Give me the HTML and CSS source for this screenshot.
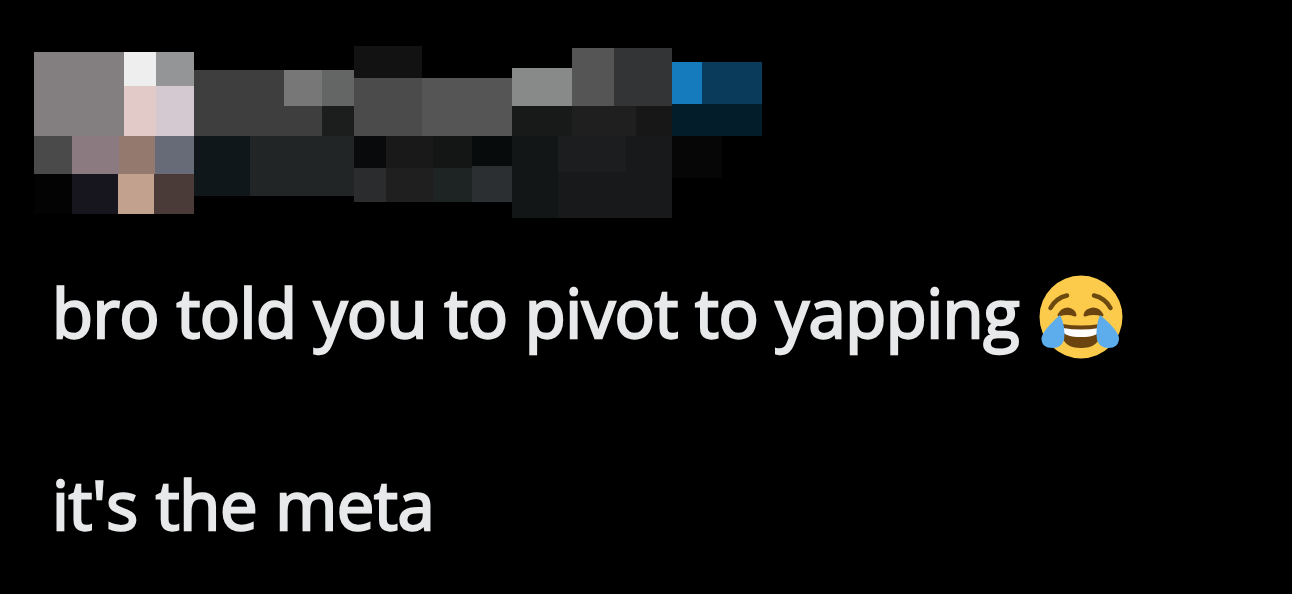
FILE: index.html
```html
<!DOCTYPE html>
<html lang="en">

<head>
    <meta charset="UTF-8">
    <meta name="viewport" content="width=device-width, initial-scale=1.0">
    <title>Post</title>
    <link rel="stylesheet" href="styles.css">
</head>

<body>
    <article class="post">
        <!-- pixelated avatar, name and handle -->
        <svg class="author" viewBox="34 46 728 172" role="img" aria-label="Hidden author">
            <!-- avatar -->
            <rect x="34" y="52" width="90" height="84" fill="#837f80"/>
            <rect x="124" y="52" width="32" height="34" fill="#eeeeee"/>
            <rect x="156" y="52" width="38" height="34" fill="#949596"/>
            <rect x="124" y="86" width="32" height="50" fill="#e1cac7"/>
            <rect x="156" y="86" width="38" height="50" fill="#d4c9d1"/>
            <rect x="34" y="136" width="38" height="38" fill="#4a4a4a"/>
            <rect x="72" y="136" width="47" height="38" fill="#8b7b80"/>
            <rect x="119" y="136" width="36" height="38" fill="#94796f"/>
            <rect x="155" y="136" width="39" height="38" fill="#676b78"/>
            <rect x="34" y="174" width="38" height="40" fill="#030303"/>
            <rect x="72" y="174" width="46" height="40" fill="#17151d"/>
            <rect x="118" y="174" width="36" height="40" fill="#c2a28e"/>
            <rect x="154" y="174" width="40" height="40" fill="#4a3b38"/>

            <!-- name -->
            <rect x="194" y="70" width="128" height="66" fill="#3e3e3f"/>
            <rect x="284" y="70" width="38" height="36" fill="#777777"/>
            <rect x="322" y="70" width="32" height="36" fill="#646666"/>
            <rect x="322" y="106" width="32" height="30" fill="#1c1e1d"/>
            <rect x="194" y="136" width="56" height="60" fill="#10171b"/>
            <rect x="250" y="136" width="104" height="60" fill="#222526"/>

            <rect x="354" y="46" width="68" height="32" fill="#121212"/>
            <rect x="354" y="78" width="68" height="58" fill="#4b4b4b"/>
            <rect x="422" y="78" width="90" height="58" fill="#555555"/>
            <rect x="354" y="136" width="32" height="32" fill="#080a0b"/>
            <rect x="386" y="136" width="47" height="32" fill="#181918"/>
            <rect x="433" y="136" width="39" height="32" fill="#141616"/>
            <rect x="472" y="136" width="40" height="30" fill="#080b0c"/>
            <rect x="354" y="168" width="32" height="34" fill="#2a2c2e"/>
            <rect x="386" y="168" width="47" height="34" fill="#1f1f20"/>
            <rect x="433" y="168" width="39" height="34" fill="#1e2324"/>
            <rect x="472" y="166" width="40" height="36" fill="#2c2f31"/>

            <rect x="512" y="68" width="60" height="38" fill="#878a89"/>
            <rect x="572" y="48" width="42" height="58" fill="#555555"/>
            <rect x="614" y="48" width="58" height="58" fill="#333435"/>
            <rect x="512" y="106" width="60" height="30" fill="#181a19"/>
            <rect x="572" y="106" width="64" height="30" fill="#1f1f1f"/>
            <rect x="636" y="106" width="36" height="30" fill="#171717"/>
            <rect x="512" y="136" width="160" height="82" fill="#17191a"/>
            <rect x="512" y="136" width="46" height="82" fill="#131617"/>
            <rect x="558" y="136" width="68" height="36" fill="#1b1d1e"/>

            <!-- badge -->
            <rect x="672" y="62" width="30" height="42" fill="#167bbd"/>
            <rect x="702" y="62" width="60" height="42" fill="#0a3b5a"/>
            <rect x="672" y="104" width="90" height="32" fill="#041d2b"/>
            <rect x="672" y="136" width="50" height="42" fill="#060606"/>
        </svg>

        <p class="line">bro told you to pivot to yapping
            <svg class="emoji" viewBox="0 0 84 84" role="img" aria-label="Face with tears of joy">
                <circle cx="42" cy="42" r="41.5" fill="#fdcb4c"/>
                <g fill="none" stroke="#6b4a10" stroke-width="4.500" stroke-linecap="round">
                    <path d="M11.500 33Q17 23 28 20.500"/>
                    <path d="M71.500 33Q66 23 55 20.500"/>
                </g>
                <path d="M20 40Q23 34 29 34Q35 35 36 40Q28 37 20 40Z" fill="#6b4410" stroke="#6b4410" stroke-width="3" stroke-linejoin="round"/>
                <path d="M46 40Q47 35 54 34Q60 34 63 40Q55 37 46 40Z" fill="#6b4410" stroke="#6b4410" stroke-width="3" stroke-linejoin="round"/>
                <path d="M23 49Q42 52 61 49V60Q59 73 42 73Q25 73 23 60Z" fill="#6b4410"/>
                <path d="M24 53Q42 56 60 53V56Q58 62 42 62Q26 62 24 56Z" fill="#ffffff"/>
                <path d="M21 40Q27 52 25 65Q22 73 14 73Q2 73 2.500 63Q4 55 21 40Z" fill="#5dadec"/>
                <path d="M61 40Q56 52 58 65Q61 73 69 73Q80 73 80 63Q79 55 61 40Z" fill="#5dadec"/>
            </svg>
        </p>
        <p class="line last">it's the meta</p>
    </article>
</body>

</html>
```
FILE: styles.css
```css
body {
    margin: 0;
    background-color: #000;
    color: #e7e9ea;
    font-family: "Open Sans", "Noto Sans", sans-serif;
}

.post {
    padding: 46px 34px 0;
}

.author {
    display: block;
    width: 728px;
    height: 172px;
    margin-bottom: 46px;
    shape-rendering: crispEdges;
}

.line {
    margin: 0 0 96px 18px;
    font-size: 67px;
    line-height: 96px;
    letter-spacing: -0.5px;
    word-spacing: 0.3px;
    white-space: nowrap;
    -webkit-text-stroke: 2.3px #e7e9ea; /* medium weight */
}

.last {
    margin-bottom: 0;
    letter-spacing: -0.4px;
    word-spacing: 1px;
}

.emoji {
    width: 84px;
    height: 84px;
    margin: -10px 0 -10px 3px;
    vertical-align: -11px;
}
```
